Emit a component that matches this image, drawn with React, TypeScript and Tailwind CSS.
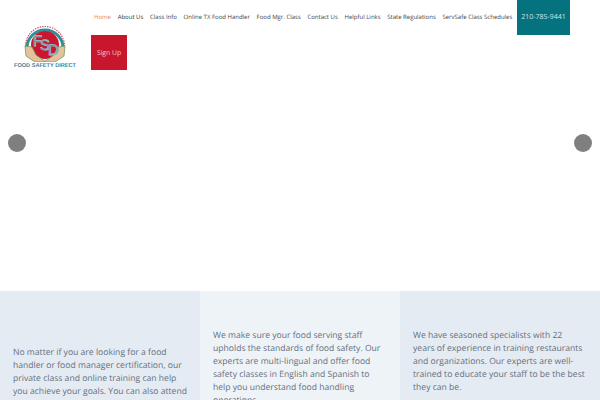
const navLinks = [
  { label: 'Home', color: 'text-[#e0876f]' },
  { label: 'About Us', color: 'text-[#333333]' },
  { label: 'Class Info', color: 'text-[#444444]' },
  { label: 'Online TX Food Handler', color: 'text-[#444444]' },
  { label: 'Food Mgr. Class', color: 'text-[#444444]' },
  { label: 'Contact Us', color: 'text-[#444444]' },
  { label: 'Helpful Links', color: 'text-[#444444]' },
  { label: 'State Regulations', color: 'text-[#444444]' },
  { label: 'ServSafe Class Schedules', color: 'text-[#444444]' },
]

function Logo() {
  return (
    <div className="flex w-[62px] flex-col items-center">
      <svg width="48" height="40" viewBox="0 0 48 40">
        {/* ring */}
        <path d="M6 26 A18 18 0 0 1 42 26" fill="none" stroke="#2f8f9a" strokeWidth="3" />
        <path d="M4.5 24 A19.5 19.5 0 0 1 43.5 24" fill="none" stroke="#d0556a" strokeWidth="1.2" strokeDasharray="1.5 1" />
        {/* disc */}
        <circle cx="24" cy="23" r="14" fill="#c8172f" />
        {/* hands */}
        <path d="M4 24 L5 34 L14 40 L25 40 L15 33 L11 25 Z" fill="#e6c29a" stroke="#6f9a5c" strokeWidth="0.8" />
        <path d="M44 24 L43 34 L34 40 L23 40 L33 33 L37 25 Z" fill="#e6c29a" stroke="#6f9a5c" strokeWidth="0.8" />
        <text x="12" y="24" fontFamily="Liberation Sans, sans-serif" fontSize="15" fill="#c8172f" stroke="#7fd0da" strokeWidth="0.8">F</text>
        <text x="19" y="28" fontFamily="Liberation Sans, sans-serif" fontSize="15" fill="#c8172f" stroke="#7fd0da" strokeWidth="0.8">S</text>
        <text x="27" y="33" fontFamily="Liberation Sans, sans-serif" fontSize="15" fill="#c8172f" stroke="#7fd0da" strokeWidth="0.8">D</text>
      </svg>
      <span className="whitespace-nowrap font-['Liberation_Sans',sans-serif] text-[5.6px] font-bold leading-[8px] text-[#4a8296]">
        FOOD SAFETY DIRECT
      </span>
    </div>
  )
}

const columns = [
  {
    bg: 'bg-[#e4ebf2]',
    pad: 'pt-[55px] pr-[12px]',
    text: 'No matter if you are looking for a food handler or food manager certification, our private class and online training can help you achieve your goals. You can also attend',
  },
  {
    bg: 'bg-[#eef3f7]',
    pad: 'pt-[38px] pr-[12px]',
    text: 'We make sure your food serving staff upholds the standards of food safety. Our experts are multi-lingual and offer food safety classes in English and Spanish to help you understand food handling operations.',
  },
  {
    bg: 'bg-[#e4ebf2]',
    pad: 'pt-[38px] pr-[14.5px]',
    text: 'We have seasoned specialists with 22 years of experience in training restaurants and organizations. Our experts are well-trained to educate your staff to be the best they can be.',
  },
]

export default function App() {
  return (
    <div className="relative h-[400px] w-[600px] overflow-hidden bg-white font-['Open_Sans',sans-serif] [text-rendering:geometricPrecision]">
      <header className="flex h-[291px] items-start">
        <div className="ml-[14px] mt-[22px] shrink-0">
          <Logo />
        </div>
        <div className="ml-[15px]">
          <nav className="flex items-start gap-[6.7px] pl-[3px]">
            {navLinks.map((link) => (
              <a key={link.label} className={`whitespace-nowrap text-[6px] leading-[35px] ${link.color}`}>
                {link.label}
              </a>
            ))}
            <a className="-ml-[2px] h-[35px] w-[53px] shrink-0 bg-[#05727f] text-center text-[7px] leading-[35px] text-[#cfe6e8]">
              210-785-9441
            </a>
          </nav>
          <a className="block h-[35px] w-[36px] bg-[#c8162c] text-center text-[6.8px] leading-[35px] text-[#f3c9cd]">
            Sign Up
          </a>
        </div>
      </header>

      <span className="absolute left-[8px] top-[134px] h-[18px] w-[18px] rounded-full bg-[#7f7f7f]" />
      <span className="absolute left-[574px] top-[134px] h-[18px] w-[18px] rounded-full bg-[#7f7f7f]" />

      <section className="grid h-[109px] grid-cols-3 overflow-hidden">
        {columns.map((col) => (
          <div key={col.text} className={`${col.bg} ${col.pad} pl-[13px]`}>
            <p className="text-[8.6px] leading-[13px] text-[#66707f]">{col.text}</p>
          </div>
        ))}
      </section>
    </div>
  )
}
